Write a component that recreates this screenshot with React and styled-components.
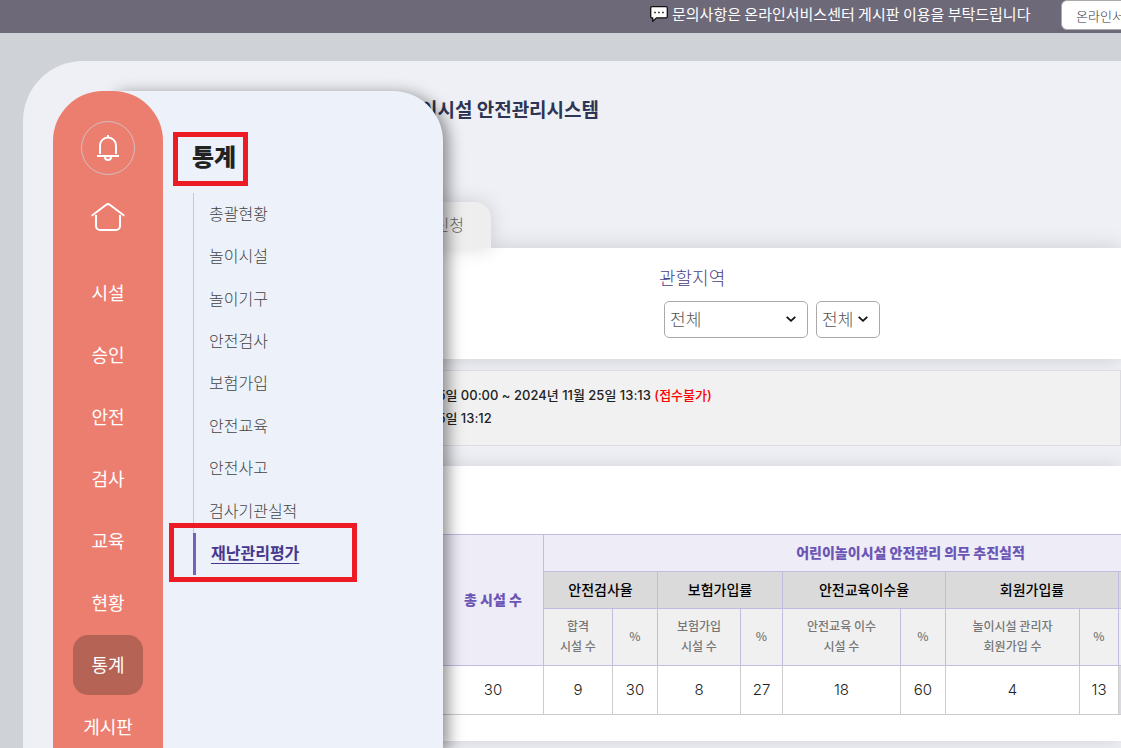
import React from "react";
import styled, { createGlobalStyle } from "styled-components";

const navItems = ["시설", "승인", "안전", "검사", "교육", "현황", "통계", "게시판"];

const subItems = [
  "총괄현황",
  "놀이시설",
  "놀이기구",
  "안전검사",
  "보험가입",
  "안전교육",
  "안전사고",
  "검사기관실적",
  "재난관리평가",
];

const columns = [101, 69, 45, 83, 42, 118, 45, 134, 39, 114, 45];

const groups = ["안전검사율", "보험가입률", "안전교육이수율", "회원가입률", ""];

const subHeads = [
  ["합격", "시설 수"],
  ["%"],
  ["보험가입", "시설 수"],
  ["%"],
  ["안전교육 이수", "시설 수"],
  ["%"],
  ["놀이시설 관리자", "회원가입 수"],
  ["%"],
  [],
  [],
];

const values = ["30", "9", "30", "8", "27", "18", "60", "4", "13"];

const BellIcon = () => (
  <svg width="24" height="28" viewBox="0 0 24 28" fill="none" stroke="#fff" strokeWidth="2">
    <path d="M4 20V11.500a8 8 0 0 1 16 0V20" />
    <path d="M1 22h22M12 1v3" />
    <path d="M9 23a3 3 0 0 0 6 0" />
  </svg>
);

const HomeIcon = () => (
  <svg width="34" height="28" viewBox="0 0 34 28" fill="none" stroke="#fff" strokeWidth="2">
    <path d="M.7 12.700 15.200 1.800a3 3 0 0 1 3.600 0L33.300 12.700" />
    <path d="M5 12v11a4 4 0 0 0 4 4h16a4 4 0 0 0 4-4V12" />
  </svg>
);

const ChatIcon = () => (
  <svg width="18" height="16" viewBox="0 0 18 16">
    <path
      d="M2 .7h14q1.300 0 1.300 1.300v8.500q0 1.300-1.300 1.300H6.500L2.700 15.300V11.800H2Q.7 11.800.7 10.500V2Q.7.7 2 .7Z"
      fill="#fff"
      stroke="#111"
      strokeWidth="1.3"
    />
    <path d="M4.300 6.500h1.500M8.200 6.500h1.500M12.200 6.500h1.500" stroke="#111" strokeWidth="1.4" />
  </svg>
);

const Chevron = () => (
  <svg width="10" height="6" viewBox="0 0 10 6" fill="none" stroke="#111" strokeWidth="1.8">
    <path d="M.7.8 5 4.800 9.300.8" />
  </svg>
);

const App = () => {
  return (
    <Page>
      <GlobalStyle />
      <TopBar>
        <Notice>
          <ChatIcon />
          <p>문의사항은 온라인서비스센터 게시판 이용을 부탁드립니다</p>
        </Notice>
        <TopButton>온라인서비스센터</TopButton>
      </TopBar>
      <Panel>
        <Content>
          <Title>어린이놀이시설 안전관리시스템</Title>
          <Tab type="button">신청</Tab>
          <Filter>
            <label htmlFor="region">관할지역</label>
            <div className="selects">
              <SelectBox $width={144}>
                <select id="region">
                  <option>전체</option>
                </select>
                <Chevron />
              </SelectBox>
              <SelectBox $width={64}>
                <select aria-label="시군구">
                  <option>전체</option>
                </select>
                <Chevron />
              </SelectBox>
            </div>
          </Filter>
          <Period>
            <p>
              2024년 11월 25일 00:00 ~ 2024년 11월 25일 13:13 <em>(접수불가)</em>
            </p>
            <p>2024년 11월 25일 13:12</p>
          </Period>
          <TableCard>
            <Table>
              <colgroup>
                {columns.map((width, i) => (
                  <col key={i} style={{ width }} />
                ))}
              </colgroup>
              <thead>
                <tr className="main">
                  <th rowSpan={3}>총 시설 수</th>
                  <th colSpan={10}>어린이놀이시설 안전관리 의무 추진실적</th>
                </tr>
                <tr className="group">
                  {groups.map((group, i) => (
                    <th key={i} colSpan={2}>
                      {group}
                    </th>
                  ))}
                </tr>
                <tr className="sub">
                  {subHeads.map((lines, i) => (
                    <th key={i}>
                      {lines.map((line) => (
                        <div key={line}>{line}</div>
                      ))}
                    </th>
                  ))}
                </tr>
              </thead>
              <tbody>
                <tr>
                  {values.map((value, i) => (
                    <td key={i}>{value}</td>
                  ))}
                  <td className="empty" colSpan={2} />
                </tr>
              </tbody>
            </Table>
          </TableCard>
        </Content>
        <Drawer>
          <Nav>
            <BellButton type="button" aria-label="알림">
              <BellIcon />
            </BellButton>
            <HomeLink href="#home" aria-label="홈">
              <HomeIcon />
            </HomeLink>
            {navItems.map((item) => (
              <NavLink key={item} href="#menu" $active={item === "통계"}>
                {item}
              </NavLink>
            ))}
          </Nav>
          <SubMenu>
            <SubTitle>통계</SubTitle>
            <SubList>
              {subItems.map((item) => (
                <SubItem key={item} $active={item === "재난관리평가"}>
                  <a href="#stats">{item}</a>
                </SubItem>
              ))}
            </SubList>
          </SubMenu>
        </Drawer>
      </Panel>
    </Page>
  );
};

const GlobalStyle = createGlobalStyle`
  *,
  *::after {
    box-sizing: border-box;
    margin: 0;
    padding: 0;
  }
  body {
    font-family: "Noto Sans CJK KR", sans-serif;
    overflow: hidden;
  }
  button, select {
    font-family: inherit;
  }
  a {
    color: inherit;
    text-decoration: none;
  }
`;

const Page = styled.div`
  height: 100vh;
  display: flex;
  flex-direction: column;
  overflow: hidden;
  background: #cfd2d7;
`;

const TopBar = styled.header`
  height: 33px;
  flex: none;
  display: flex;
  align-items: flex-start;
  gap: 22px;
  padding-left: 650px;
  background: #6d6979;
`;

const Notice = styled.div`
  flex: none;
  width: 389px;
  height: 28px;
  display: flex;
  align-items: center;
  gap: 4px;
  color: #fff;
  font-size: 15px;
  white-space: nowrap;
  p {
    padding-bottom: 2px;
  }
`;

const TopButton = styled.button`
  flex: none;
  height: 30px;
  padding: 0 14px;
  border: 1px solid #aaa;
  border-radius: 6px;
  background: #fff;
  color: #333;
  font-size: 13px;
  font-weight: 300;
`;

const Panel = styled.main`
  position: relative;
  flex: 1;
  margin: 28px 0 0 23px;
  border-top-left-radius: 60px;
  background: #eff0f5;
  overflow: hidden;
`;

const Content = styled.div`
  display: flex;
  flex-direction: column;
  align-items: flex-start;
  margin-left: 200px;
  padding-top: 32px;
`;

const Title = styled.h1`
  height: 32px;
  padding-left: 127px;
  color: #2d3552;
  font-size: 19px;
  font-weight: 700;
  line-height: 32px;
  white-space: nowrap;
`;

const Tab = styled.button`
  flex: none;
  width: 138px;
  height: 46px;
  margin: 77px 0 0 130px;
  padding: 0 27px 2px 0;
  border: none;
  border-radius: 0 16px 0 0;
  background: #eee;
  box-shadow: 0 0 20px rgba(0, 0, 0, 0.15);
  color: #666;
  font-size: 16px;
  font-weight: 300;
  text-align: right;
  z-index: 1;
`;

const Filter = styled.section`
  width: 100%;
  height: 111px;
  padding: 15px 0 0 436px;
  background: #fff;
  box-shadow: 0 0 20px rgba(0, 0, 0, 0.15);
  label {
    display: block;
    color: #4b3f87;
    font-size: 18px;
    font-weight: 300;
    line-height: 28px;
  }
  .selects {
    display: flex;
    gap: 8px;
    padding: 10px 0 0 5px;
  }
`;

const SelectBox = styled.div`
  position: relative;
  width: ${({ $width }) => $width}px;
  height: 37px;
  select {
    width: 100%;
    height: 100%;
    padding: 0 0 2px 5px;
    appearance: none;
    border: 1px solid #aaa;
    border-radius: 5px;
    background: #fff;
    color: #555;
    font-size: 17px;
    font-weight: 300;
  }
  svg {
    position: absolute;
    top: 15px;
    right: 12px;
    pointer-events: none;
  }
`;

const Period = styled.section`
  position: relative;
  width: 100%;
  height: 76px;
  margin-top: 11px;
  padding: 13px 0 0 131px;
  border: 1px solid #dcdce0;
  background: #f1f1f1;
  color: #222;
  font-family: Inter, "Noto Sans CJK KR", sans-serif;
  font-size: 13px;
  font-weight: 500;
  line-height: 23px;
  white-space: nowrap;
  em {
    color: #f00;
    font-style: normal;
  }
`;

const TableCard = styled.section`
  width: 100%;
  height: 275px;
  margin-top: 20px;
  padding: 68px 0 0 219px;
  background: #fff;
  box-shadow: 0 0 20px rgba(0, 0, 0, 0.12);
  overflow: hidden;
`;

const Table = styled.table`
  width: 835px;
  table-layout: fixed;
  border-collapse: collapse;
  text-align: center;
  th,
  td {
    border: 1px solid #c3bbe0;
  }
  .main th {
    height: 37px;
    padding-bottom: 2px;
    background: #eeecf7;
    color: #6b56b5;
    font-size: 14px;
    font-weight: 900;
  }
  .group th {
    height: 37px;
    padding-bottom: 2px;
    background: #dadada;
    color: #000;
    font-size: 14px;
    font-weight: 500;
  }
  .sub th {
    height: 57px;
    padding-bottom: 2px;
    background: #f0f0f0;
    color: #777;
    font-size: 12px;
    font-weight: 500;
    line-height: 20px;
  }
  td {
    height: 49px;
    padding-bottom: 2px;
    border-color: #ccc;
    color: #222;
    font-family: Inter, sans-serif;
    font-size: 15px;
    font-weight: 300;
  }
  .empty {
    background: #dadae0;
  }
`;

const Drawer = styled.aside`
  position: absolute;
  top: 30px;
  bottom: 0;
  left: 30px;
  width: 390px;
  display: flex;
  z-index: 2;
`;

const Nav = styled.nav`
  width: 110px;
  flex: none;
  display: flex;
  flex-direction: column;
  align-items: center;
  gap: 2px;
  padding-top: 30px;
  border-radius: 50px 50px 0 0;
  background: #ec7e70;
  overflow: hidden;
  z-index: 1;
`;

const BellButton = styled.button`
  flex: none;
  width: 54px;
  height: 54px;
  display: flex;
  align-items: center;
  justify-content: center;
  border: 1px solid #d3bfc0;
  border-radius: 50%;
  background: none;
`;

const HomeLink = styled.a`
  flex: none;
  height: 84px;
  padding-top: 26px;
`;

const NavLink = styled.a`
  flex: none;
  width: 70px;
  height: 60px;
  display: flex;
  align-items: center;
  justify-content: center;
  padding-bottom: 3px;
  border-radius: 15px;
  background: ${({ $active }) => ($active ? "#b56355" : "transparent")};
  color: #fff;
  font-size: 18px;
  font-weight: 400;
`;

const SubMenu = styled.div`
  flex: 1;
  margin-left: -50px;
  padding: 41px 0 0 60px;
  border-radius: 0 50px 0 0;
  background: #ecf1fa;
  box-shadow: 5px 3px 16px rgba(0, 0, 0, 0.45);
`;

const SubTitle = styled.h2`
  width: 75px;
  height: 54px;
  padding-left: 14px;
  border: 5px solid #ed1c24;
  color: #222;
  font-size: 24px;
  font-weight: 900;
  line-height: 38px;
`;

const SubList = styled.ul`
  height: 382px;
  margin: 7px 0 0 20px;
  display: grid;
  grid-auto-rows: 1fr;
  list-style: none;
`;

const SubItem = styled.li`
  position: relative;
  display: flex;
  align-items: center;
  padding: 0 0 3px 15px;
  border-left: ${({ $active }) => ($active ? "3px solid #7562b8" : "1px solid #c5c8d0")};
  color: ${({ $active }) => ($active ? "#46378c" : "#444")};
  font-size: 16px;
  font-weight: ${({ $active }) => ($active ? 700 : 300)};
  a {
    text-decoration: ${({ $active }) => ($active ? "underline" : "none")};
    text-underline-offset: 4px;
  }
  &::after {
    content: "";
    display: ${({ $active }) => ($active ? "block" : "none")};
    position: absolute;
    top: -10px;
    left: -27px;
    width: 188px;
    height: 59px;
    border: 5px solid #ed1c24;
    pointer-events: none;
  }
`;

export default App;
